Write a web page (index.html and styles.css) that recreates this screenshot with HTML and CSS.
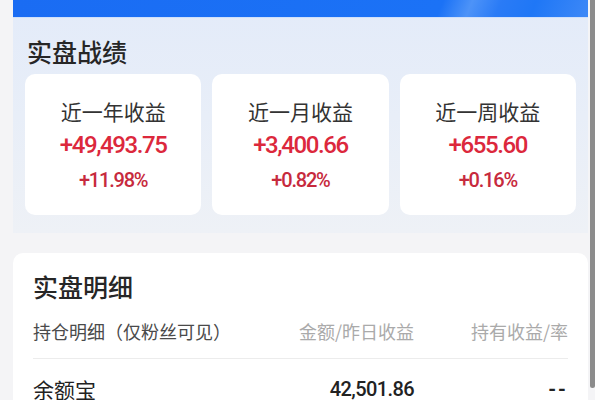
FILE: index.html
```html
<!DOCTYPE html>
<html lang="zh-CN">
<head>
<meta charset="utf-8">
<link rel="stylesheet" href="styles.css">
</head>
<body>
<div class="page">
  <section class="perf">
    <div class="perf-top"></div>
    <h2 class="title">实盘战绩</h2>
    <div class="cards">
      <div class="card">
        <div class="label">近一年收益</div>
        <div class="amount">+49,493.75</div>
        <div class="pct">+11.98%</div>
      </div>
      <div class="card">
        <div class="label">近一月收益</div>
        <div class="amount">+3,400.66</div>
        <div class="pct">+0.82%</div>
      </div>
      <div class="card">
        <div class="label">近一周收益</div>
        <div class="amount">+655.60</div>
        <div class="pct">+0.16%</div>
      </div>
    </div>
  </section>
  <section class="detail">
    <h2 class="title">实盘明细</h2>
    <div class="head">
      <span class="c1">持仓明细（仅粉丝可见）</span>
      <span class="c2">金额/昨日收益</span>
      <span class="c3">持有收益/率</span>
    </div>
    <div class="row">
      <span class="c1 name">余额宝</span>
      <span class="c2 num">42,501.86</span>
      <span class="c3 num dash">--</span>
    </div>
  </section>
</div>
<div class="gutter"></div>
<div class="thumb"></div>
</body>
</html>
```
FILE: styles.css
```css
html, body {
  margin: 0;
  padding: 0;
}
body {
  width: 600px;
  height: 400px;
  overflow: hidden;
  background: #f4f4f6;
  font-family: "Noto Sans CJK SC", "Noto Sans", sans-serif;
  position: relative;
}
.page {
  width: 575px;
  margin-left: 13px;
}
.perf {
  background: linear-gradient(180deg, #e3ebf9 0%, #e8eef8 50%, #eef1f6 100%);
  padding: 0 12px 18px 12px;
}
.perf-top {
  height: 17px;
  margin: 0 -12px;
  background: linear-gradient(112deg, #1a6cf3 0%, #1b72f6 74%, #4d93f8 79%, #2a7bf6 84%, #1f77f6 90%, #3d88f7 100%);
  border-bottom: 1px solid #cfe0fb;
}
.title {
  margin: 0;
  font-size: 25px;
  line-height: 32px;
  font-weight: 500;
  color: #262626;
}
.perf .title {
  padding-top: 17px;
  padding-left: 2px;
}
.cards {
  display: flex;
  gap: 11px;
  margin-top: 7px;
}
.card {
  flex: 1;
  height: 141px;
  box-sizing: border-box;
  background: #fff;
  border-radius: 10px;
  padding-top: 24px;
  text-align: center;
}
.label {
  font-size: 21px;
  line-height: 26px;
  color: #333;
}
.amount {
  margin-top: 6px;
  font-family: Roboto, "Liberation Sans", sans-serif;
  font-size: 24px;
  font-weight: 500;
  line-height: 30px;
  letter-spacing: -1.4px;
  color: #dc283c;
}
.pct {
  margin-top: 7px;
  font-family: Roboto, "Liberation Sans", sans-serif;
  font-size: 20px;
  font-weight: 500;
  line-height: 26px;
  letter-spacing: -1.2px;
  color: #c72a3d;
}
.detail {
  margin-top: 20px;
  background: #fff;
  border-radius: 10px 10px 0 0;
  padding: 17px 20px 0 20px;
  height: 147px;
  box-sizing: border-box;
}
.detail .title {
  font-size: 25px;
}
.head, .row {
  display: flex;
  align-items: center;
}
.head {
  margin-top: 17px;
  padding-bottom: 15px;
  border-bottom: 1px solid #ececec;
  font-size: 18px;
  line-height: 24px;
}
.head .c1 {
  color: #4a4a4a;
  flex: 1;
}
.head .c2, .head .c3 {
  color: #aaa;
}
.c2 {
  width: 160px;
  text-align: right;
}
.c3 {
  width: 154px;
  text-align: right;
}
.row {
  padding-top: 17px;
  line-height: 26px;
}
.row .c1 {
  flex: 1;
}
.name {
  font-size: 21px;
  color: #222;
}
.num {
  font-family: Roboto, "Liberation Sans", sans-serif;
  font-size: 20px;
  font-weight: 500;
  color: #222;
  letter-spacing: -0.6px;
}
.dash {
  letter-spacing: 2px;
  font-weight: 700;
}
.gutter {
  position: absolute;
  left: 595px;
  top: 0;
  width: 5px;
  height: 400px;
  background: #fdfdfd;
}
.thumb {
  position: absolute;
  left: 590px;
  top: 0;
  width: 5px;
  height: 388px;
  border-radius: 0 0 3px 3px;
  background: #8a8a8a;
}
```
